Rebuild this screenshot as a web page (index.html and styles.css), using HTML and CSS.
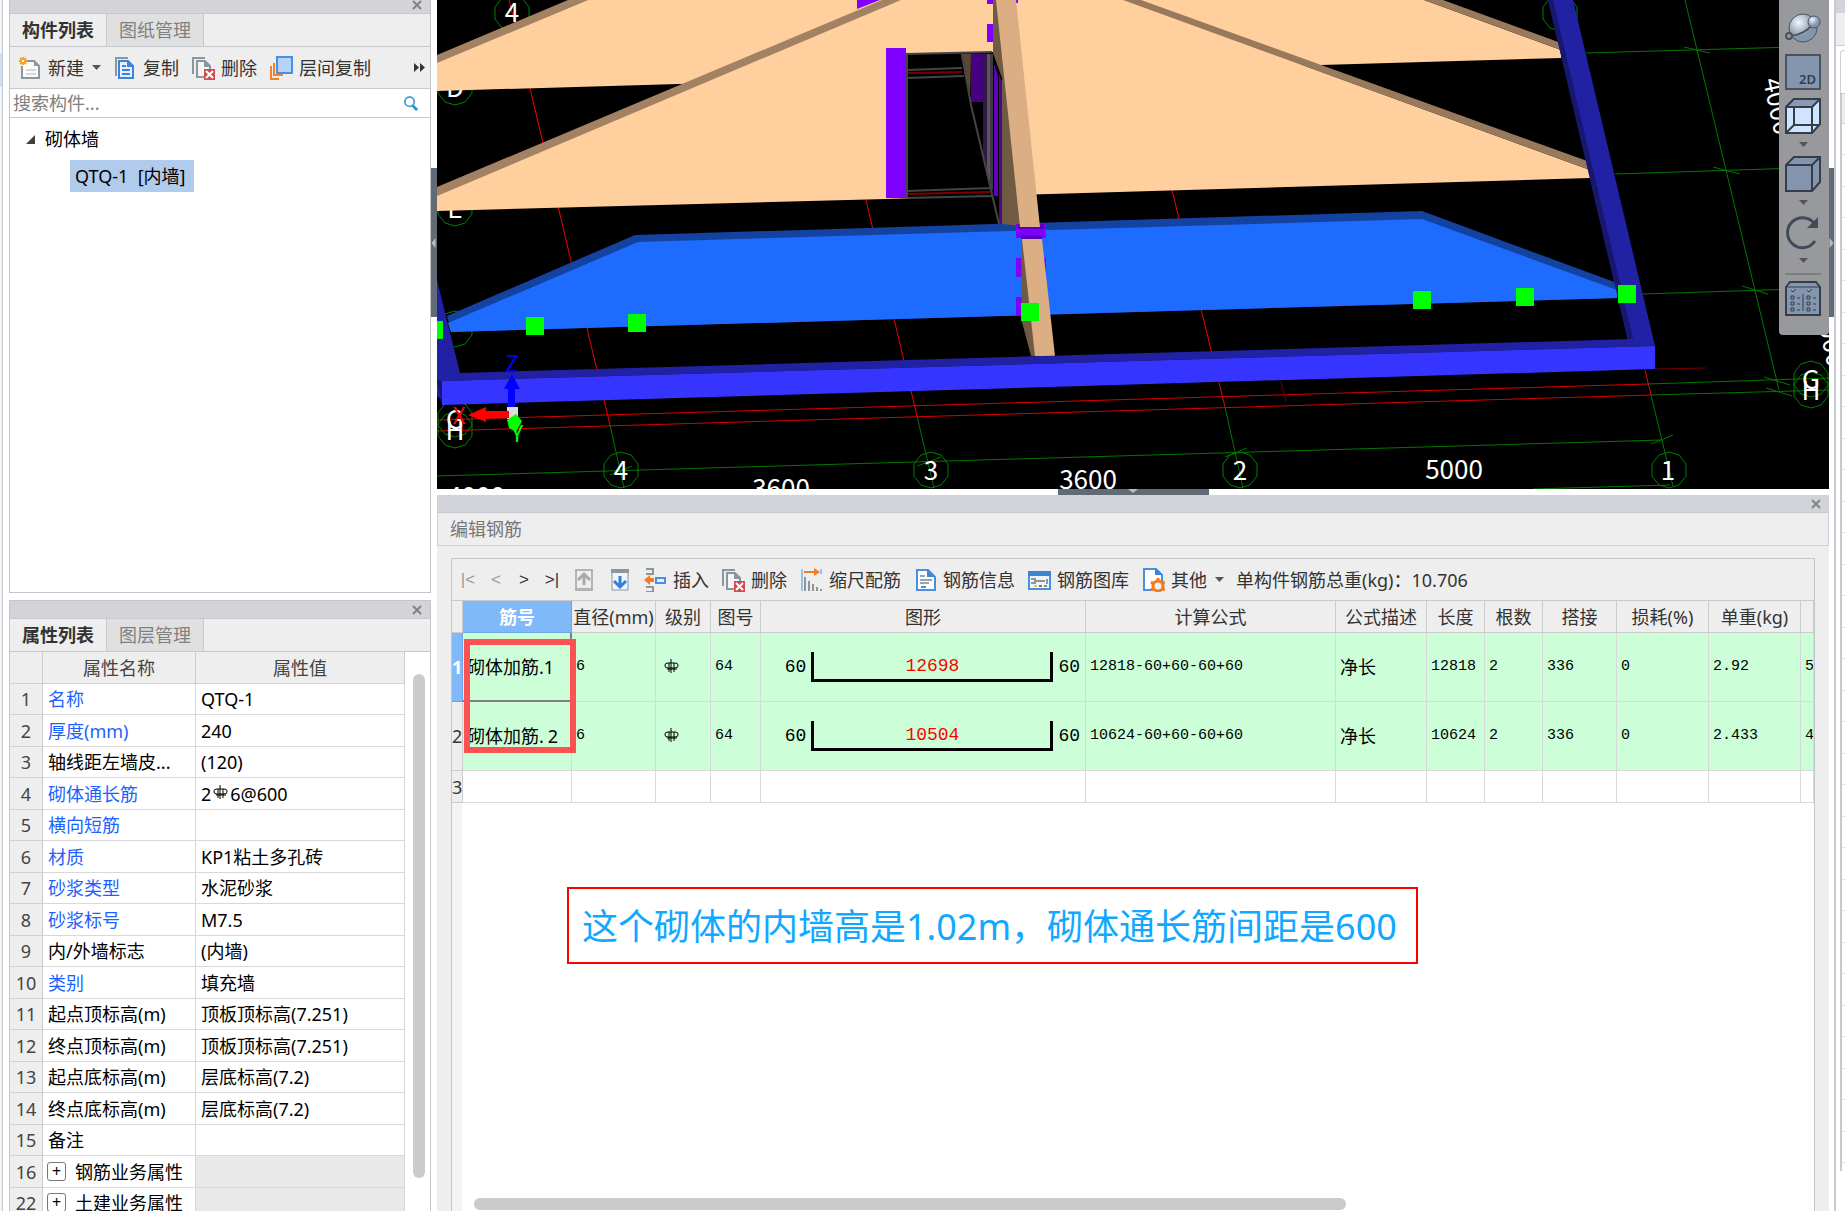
FILE: index.html
```html
<!DOCTYPE html>
<html lang="zh-CN">
<head>
  <meta charset="UTF-8">
  <title>编辑钢筋</title>
  <link rel="stylesheet" href="styles.css">
</head>
<body>

  <!-- shared icons -->
  <svg class="defs" width="0" height="0">
    <symbol id="i-new" viewBox="0 0 24 24">
      <path d="M6 5h10l5 5v12H4V10" fill="#fafafa" stroke="#8b979d" stroke-width="2"/>
      <path d="M16 4v6h6z" fill="#8b979d"/>
      <path d="M8 14h10M8 18h10" stroke="#d6d6d6" stroke-width="2"/>
      <path d="M5 1v8M1 5h8M2 2l6 6M8 2l-6 6" stroke="#f9a02c" stroke-width="2"/>
      <rect x="4" y="4" width="2" height="2" fill="#fff"/>
    </symbol>
    <symbol id="i-copy" viewBox="0 0 24 24">
      <path d="M3 20V2h12" fill="none" stroke="#8b979d" stroke-width="2"/>
      <path d="M6 5h9l5 5v12H6z" fill="#e6f1ff" stroke="#3d84d6" stroke-width="2"/>
      <path d="M14 4v7h7z" fill="#3d84d6"/>
      <path d="M9 10h4M9 14h8M9 18h8" stroke="#3d84d6" stroke-width="2"/>
    </symbol>
    <symbol id="i-del" viewBox="0 0 24 24">
      <path d="M2 18V2h12" fill="none" stroke="#8b979d" stroke-width="2"/>
      <path d="M6 5h8l5 5v11H6z" fill="#f5f5f5" stroke="#8b979d" stroke-width="2"/>
      <path d="M13 4v7h7z" fill="#8b979d"/>
      <rect x="13" y="13" width="11" height="11" fill="#d8484d"/>
      <path d="M15 15l7 7M22 15l-7 7" stroke="#fff" stroke-width="2"/>
    </symbol>
    <symbol id="i-layer" viewBox="0 0 24 24">
      <path d="M2 10v13h8M5 7v12h9" fill="none" stroke="#f4802a" stroke-width="2"/>
      <rect x="8" y="1" width="15" height="16" fill="#b5d3fb" stroke="#4a90e2" stroke-width="2"/>
    </symbol>
    <symbol id="i-insert" viewBox="0 0 24 24">
      <path d="M3 1h7v5H3M3 24h7v-5H3" fill="none" stroke="#8b979d" stroke-width="2"/>
      <path d="M1 12l6-5v3h4v4H7v3z" fill="#f47b20"/>
      <path d="M13 10h9v5h-9z" fill="#e6f1ff" stroke="#4a90e2" stroke-width="2"/>
    </symbol>
    <symbol id="i-scale" viewBox="0 0 24 24">
      <path d="M3 1v22M22 1v5" stroke="#4a90e2" stroke-width="1"/>
      <path d="M5 4h12" stroke="#f47b20" stroke-width="2"/>
      <path d="M15 0l6 4-6 4z" fill="#f47b20"/>
      <path d="M6 9v14M10 13v10M14 16v7M18 19v4M22 21v2" stroke="#8b979d" stroke-width="2"/>
    </symbol>
    <symbol id="i-info" viewBox="0 0 24 24">
      <path d="M4 2h11l7 7v13H4z" fill="#fff" stroke="#4a90e2" stroke-width="2"/>
      <path d="M14 1v8h8z" fill="#3d84d6"/>
      <path d="M7 8h5M7 12h12M7 15h9" stroke="#9aa5aa" stroke-width="2"/>
      <path d="M8 19h5" stroke="#4a90e2" stroke-width="2"/>
    </symbol>
    <symbol id="i-lib" viewBox="0 0 24 24">
      <rect x="2" y="4" width="21" height="17" fill="#eef5ff" stroke="#4a90e2" stroke-width="2"/>
      <rect x="1" y="3" width="23" height="5" fill="#3d84d6"/>
      <path d="M4 11h4v4H4M8 13h10M20 11v5" fill="none" stroke="#8b979d" stroke-width="2"/>
      <path d="M7 18h3" stroke="#f0c030" stroke-width="2"/><path d="M12 18h3" stroke="#e05050" stroke-width="2"/><path d="M17 18h3" stroke="#50b050" stroke-width="2"/>
    </symbol>
    <symbol id="i-other" viewBox="0 0 24 24">
      <path d="M3 1h12l6 6v15H3z" fill="#fff" stroke="#4a90e2" stroke-width="2"/>
      <path d="M14 0v7h8z" fill="#3d84d6"/>
      <circle cx="17" cy="18" r="5" fill="#eee" stroke="#f47b20" stroke-width="3"/>
      <path d="M17 10v3M17 23v2M10 14l3 2M24 14l-3 2M10 22l3-2M24 22l-3-2" stroke="#f47b20" stroke-width="3"/>
    </symbol>
    <symbol id="i-caret" viewBox="0 0 9 6"><path d="M0 0h9L4.500 5z" fill="#555"/></symbol>
    <symbol id="i-close" viewBox="0 0 10 10"><path d="M1 1l8 8M9 1L1 9" stroke="#808285" stroke-width="2"/></symbol>
    <symbol id="i-rebar" viewBox="0 0 15 14">
      <path d="M7 0v14M5 4v9M10 4v9M3 10h10M4 4h7q3 0 3 2v1q0 2-3 2H4q-3 0-3-2V6q0-2 3-2z" fill="none" stroke="#000"/>
    </symbol>
    <symbol id="axis" viewBox="-20 -20 40 40">
      <polygon points="0,-18 10,-15 17,-6 17,6 10,15 0,18 -10,15 -17,6 -17,-6 -10,-15" fill="none" stroke="#008200"/>
    </symbol>
  </svg>

  <div class="app">

    <div class="edge edge-left"><div class="edge-mark"></div></div>

    <aside class="sidebar">
      <section class="panel components">
        <div class="titlebar"><button aria-label="关闭"><svg><use href="#i-close"/></svg></button></div>
        <div class="tabs">
          <button class="tab active">构件列表</button>
          <button class="tab">图纸管理</button>
        </div>
        <div class="toolbar">
          <button class="tool"><svg class="icon"><use href="#i-new"/></svg>新建<svg class="caret"><use href="#i-caret"/></svg></button>
          <button class="tool"><svg class="icon"><use href="#i-copy"/></svg>复制</button>
          <button class="tool"><svg class="icon"><use href="#i-del"/></svg>删除</button>
          <button class="tool"><svg class="icon"><use href="#i-layer"/></svg>层间复制</button>
          <button class="more" aria-label="更多"><svg viewBox="0 0 12 9"><path d="M0 0l5 4.500L0 9zM6 0l5 4.500L6 9z" fill="#333"/></svg></button>
        </div>
        <div class="search">
          <input type="text" placeholder="搜索构件..." aria-label="搜索构件">
          <svg viewBox="0 0 16 16"><circle cx="7" cy="6" r="5" fill="none" stroke="#4ba3d9" stroke-width="2"/><path d="M10 10l5 5" stroke="#2f8fc9" stroke-width="3"/></svg>
        </div>
        <div class="tree">
          <div class="tree-node"><svg viewBox="0 0 9 9"><path d="M9 0v9H0z" fill="#404040"/></svg>砌体墙</div>
          <div class="tree-leaf">QTQ-1&nbsp; [内墙]</div>
        </div>
      </section>

      <section class="panel properties">
        <div class="titlebar"><button aria-label="关闭"><svg><use href="#i-close"/></svg></button></div>
        <div class="tabs">
          <button class="tab active">属性列表</button>
          <button class="tab">图层管理</button>
        </div>
        <div class="props-body">
          <table class="props">
            <colgroup><col class="c-no"><col class="c-name"><col></colgroup>
            <thead><tr><th></th><th>属性名称</th><th>属性值</th></tr></thead>
            <tbody>
              <tr><th>1</th><td class="key">名称</td><td>QTQ-1</td></tr>
              <tr><th>2</th><td class="key">厚度(mm)</td><td>240</td></tr>
              <tr><th>3</th><td>轴线距左墙皮...</td><td>(120)</td></tr>
              <tr><th>4</th><td class="key">砌体通长筋</td><td>2<svg class="rebar"><use href="#i-rebar"/></svg>6@600</td></tr>
              <tr><th>5</th><td class="key">横向短筋</td><td></td></tr>
              <tr><th>6</th><td class="key">材质</td><td>KP1粘土多孔砖</td></tr>
              <tr><th>7</th><td class="key">砂浆类型</td><td>水泥砂浆</td></tr>
              <tr><th>8</th><td class="key">砂浆标号</td><td>M7.5</td></tr>
              <tr><th>9</th><td>内/外墙标志</td><td>(内墙)</td></tr>
              <tr><th>10</th><td class="key">类别</td><td>填充墙</td></tr>
              <tr><th>11</th><td>起点顶标高(m)</td><td>顶板顶标高(7.251)</td></tr>
              <tr><th>12</th><td>终点顶标高(m)</td><td>顶板顶标高(7.251)</td></tr>
              <tr><th>13</th><td>起点底标高(m)</td><td>层底标高(7.2)</td></tr>
              <tr><th>14</th><td>终点底标高(m)</td><td>层底标高(7.2)</td></tr>
              <tr><th>15</th><td>备注</td><td></td></tr>
              <tr><th>16</th><td class="group"><button class="expand">+</button>钢筋业务属性</td><td class="off"></td></tr>
              <tr><th>22</th><td class="group"><button class="expand">+</button>土建业务属性</td><td class="off"></td></tr>
            </tbody>
          </table>
          <div class="vscroll"><div class="vthumb"></div></div>
        </div>
      </section>
    </aside>

    <div class="splitter"><div class="grip">
      <svg viewBox="0 0 4 10"><path d="M4 0v10L0 5z" fill="#b9bec3"/></svg>
    </div></div>

    <main class="work">
      <section class="viewport">
        <svg class="scene" viewBox="437 0 1392 489" preserveAspectRatio="xMidYMin slice">
          <rect x="0" y="0" width="2400" height="800" fill="#000"/>

          <!-- grid axes -->
          <g stroke="#f00000" stroke-width="1">
            <path d="M509 0L610 425M866 200L917 416M1172 190L1225 407M1645 370L1651 395"/>
            <path d="M437 420L1648 384M437 431L1651 395" stroke="#dc0000"/>
            <path d="M1281 382L1286 402M1655 369L1706 368" stroke="#780000"/>
          </g>
          <g stroke="#007800" stroke-width="1">
            <path d="M610 425L624 488M917 416L934 488M1225 407L1243 488M1651 395L1673 486"/>
            <path d="M437 476L1661 440M1533 489L1670 485"/>
            <path d="M1586 53L1829 46M1615 174L1829 167M1642 294L1829 288M1648 384L1829 378M1651 395L1829 390M1685 0L1779 390"/>
            <path d="M1684 47L1710 53M1713 167L1740 174M1742 286L1768 294M1764 377L1790 385M1766 388L1792 396"/>
            <path d="M1651 444L1673 435M610 475L632 466M917 466L941 457M1225 457L1247 448"/>
          </g>
          <g>
            <use href="#axis" x="492" y="-7" width="40" height="40"/>
            <use href="#axis" x="435" y="67" width="40" height="40"/>
            <use href="#axis" x="435" y="188" width="40" height="40"/>
            <use href="#axis" x="435" y="309" width="40" height="40"/>
            <use href="#axis" x="435" y="399" width="40" height="40"/>
            <use href="#axis" x="435" y="410" width="40" height="40"/>
            <use href="#axis" x="601" y="450" width="40" height="40"/>
            <use href="#axis" x="911" y="450" width="40" height="40"/>
            <use href="#axis" x="1220" y="450" width="40" height="40"/>
            <use href="#axis" x="1649" y="450" width="40" height="40"/>
            <use href="#axis" x="1540" y="-7" width="40" height="40"/>
            <use href="#axis" x="1791" y="359" width="40" height="40"/>
            <use href="#axis" x="1791" y="370" width="40" height="40"/>
          </g>
          <g class="dims">
            <text x="512" y="22">4</text>
            <text x="455" y="97">D</text>
            <text x="455" y="218">E</text>
            <text x="455" y="429">G</text>
            <text x="455" y="440">H</text>
            <text x="621" y="480">4</text>
            <text x="931" y="480">3</text>
            <text x="1240" y="480">2</text>
            <text x="1668" y="480">1</text>
            <text x="1811" y="389">G</text>
            <text x="1811" y="400">H</text>
            <text x="476" y="506">4000</text>
            <text x="781" y="498">3600</text>
            <text x="1088" y="489">3600</text>
            <text x="1454" y="479">5000</text>
            <text class="start" transform="translate(1763 80) rotate(78)">4000</text>
            <text class="start" transform="translate(1816 312) rotate(78)">5000</text>
          </g>

          <!-- rear gable -->
          <path d="M437 62L587 0H1424L1561 50V58L437 91z" fill="#ffcf9e"/>
          <path d="M437 55L568 0H588L437 63z" fill="#a38163"/>
          <path d="M1424 0H1443L1561 43V50z" fill="#98795c"/>
          <path d="M857 0H880L857 9z" fill="#8000ff"/>

          <!-- middle gable -->
          <path d="M437 195L900 0H1124L1590 170V178L886 199L437 211z" fill="#ffcf9e"/>
          <path d="M437 187L882 0H901L437 196z" fill="#a38163"/>
          <path d="M1123 0H1141L1590 162V170z" fill="#98795c"/>

          <!-- door opening -->
          <path d="M907 54L993 52L1004 78V225H907z" fill="#000"/>
          <rect x="886" y="48" width="20" height="150" fill="#8000ff"/>
          <path d="M961 54H971L970 100z" fill="#5a4634"/>
          <rect x="971" y="54" width="12" height="48" fill="#460080"/>
          <path d="M983 54H987V170L983 158z" fill="#2c1a40"/>
          <path d="M987 54H990V186L987 172z" fill="#6b4a68"/>
          <path d="M990 54H993V190H990z" fill="#3c3c3c"/>
          <path d="M994 64L998 76V196H994z" fill="#6000c0"/>
          <path d="M999 74L1002 82V224H999z" fill="#4a0a86"/>
          <path d="M907 198V54L992 52M907 70L962 68M907 78L964 76M907 191L990 188M907 198L992 196M962 55L971 105L984 160L991 190L999 224" fill="none" stroke="#444" stroke-width="2"/>
          <path d="M908 73L962 72M908 194L990 192" stroke="#7a0000" stroke-width="2"/>

          <!-- selected wall -->
          <path d="M447 316L635 235L1422 211L1617 283V298L451 332z" fill="#1442a0"/>
          <path d="M448 323L638 242L1422 219L1617 290V298L451 332z" fill="#1e6cff"/>

          <!-- cross wall -->
          <path d="M993 0H997L1021 226L1002 224V78L993 53z" fill="#705a44"/>
          <path d="M987 0H993V4H987zM987 24H993V42H987zM1015 0H1018V3H1015z" fill="#8000ff"/>
          <path d="M1016 224H1045L1046 238H1016zM1016 258H1022V277H1016zM1016 297H1022V315H1016zM1043 258H1046V275H1044z" fill="#8000ff"/>
          <path d="M1018 224H1044V229H1018zM1021 235H1042V239H1021z" fill="#5c00b8"/>
          <path d="M996 0H1016L1040 227H1020z" fill="#dbae83"/>
          <path d="M1021 239L1022 322L1031 356H1036L1029 303L1024 239z" fill="#705a44"/>
          <path d="M1022 239H1042L1055 356H1035z" fill="#dbae83"/>

          <!-- ring beam -->
          <path d="M437 280L460 373L1632 339L1655 346L442 381V400L437 396z" fill="#2121a3"/>
          <path d="M1548 0H1573L1655 346L1628 341z" fill="#2121a3"/>
          <path d="M1548 0H1553L1633 339H1628z" fill="#17176e"/>
          <path d="M442 381L1655 346V369L442 405z" fill="#3535ff"/>
          <path d="M437 380L442 381V405z" fill="#17176e"/>

          <!-- grips -->
          <path d="M425 321h18v18h-18zM526 317h18v18h-18zM628 314h18v18h-18zM1021 303h18v18h-18zM1413 291h18v18h-18zM1516 288h18v18h-18zM1618 285h18v18h-18z" fill="#00ff00"/>

          <!-- ucs -->
          <g class="ucs">
            <path d="M508 386h7v21h-7zM504 389L512 374L520 389z" fill="#0000ff"/>
            <rect x="507" y="407" width="11" height="12" fill="#ddd"/>
            <path d="M486 411h23v7h-23zM468 415L486 407V422z" fill="#ff0000"/>
            <path d="M507 420L516 414L522 421L516 432L509 428z" fill="#00ff00"/>
            <text x="512" y="372" fill="#0000ff">Z</text>
            <text x="459" y="424" fill="#ff0000">X</text>
            <text x="517" y="442" fill="#00ff00">Y</text>
          </g>
        </svg>

        <div class="viewbar">
          <button class="wide" aria-label="动态观察"><svg viewBox="0 0 36 36">
            <defs><radialGradient id="ball" cx="35%" cy="30%"><stop offset="0" stop-color="#f4f7fb"/><stop offset="1" stop-color="#8496ae"/></radialGradient></defs>
            <circle cx="18" cy="18" r="14" fill="url(#ball)" stroke="#4a5260"/>
            <circle cx="4" cy="26" r="3" fill="none" stroke="#4a5260" stroke-width="2"/>
            <path d="M6 26Q20 24 27 15" fill="none" stroke="#4a5260" stroke-width="2"/>
            <circle cx="29" cy="12" r="6" fill="url(#ball)" stroke="#4a5260"/>
          </svg></button>
          <button class="wide two-d">2D</button>
          <button aria-label="线框"><svg viewBox="0 0 36 36">
            <path d="M1 9L9 1H35V26L27 35H1z" fill="#cfe4ff" stroke="#353d4a" stroke-width="2"/>
            <path d="M1 9L9 1H35L27 9z" fill="#8a9ab3"/>
            <path d="M1 9H27V35M27 9L35 1M9 9V27H35M9 27L1 35M1 9L9 1H35" fill="none" stroke="#353d4a" stroke-width="2"/>
          </svg></button>
          <button class="drop" aria-label="线框选项"><svg><use href="#i-caret"/></svg></button>
          <button aria-label="实体"><svg viewBox="0 0 36 36">
            <path d="M1 9L9 1H35V26L27 35H1z" fill="#8496ae" stroke="#353d4a" stroke-width="2"/>
            <path d="M1 9H27V35M27 9L35 1" fill="none" stroke="#353d4a" stroke-width="2"/>
          </svg></button>
          <button class="drop" aria-label="实体选项"><svg><use href="#i-caret"/></svg></button>
          <button aria-label="旋转"><svg viewBox="0 0 36 36">
            <path d="M30 27A15 15 0 1 1 29 9" fill="none" stroke="#414a57" stroke-width="3"/>
            <path d="M33 3V14H22z" fill="#414a57"/>
          </svg></button>
          <button class="drop" aria-label="旋转选项"><svg><use href="#i-caret"/></svg></button>
          <hr>
          <button aria-label="显示设置"><svg viewBox="0 0 36 36">
            <path d="M1 7L5 2H31L35 7V35H1z" fill="#8496ae" stroke="#353d4a" stroke-width="2"/>
            <path d="M1 7H35M18 14V31M12 18h3M12 24h3M12 30h3M28 18h3M28 24h3M28 30h3" stroke="#353d4a"/>
            <path d="M6 10l2 2 3-3M22 10l2 2 3-3M6 16h3v3H6zM6 22h3v3H6zM6 28h3v3H6zM22 16h3v3h-3zM22 22h3v3h-3zM22 28h3v3h-3z" fill="none" stroke="#353d4a"/>
          </svg></button>
        </div>
      </section>

      <div class="hsplitter"><div class="hgrip">
        <svg viewBox="0 0 10 4"><path d="M0 0h10L5 4z" fill="#b9bec3"/></svg>
      </div></div>

      <section class="rebar-panel">
        <div class="titlebar"><button aria-label="关闭"><svg><use href="#i-close"/></svg></button></div>
        <div class="caption">编辑钢筋</div>
        <div class="editor">
          <div class="toolbar">
            <div class="nav">
              <button disabled>|&lt;</button>
              <button disabled>&lt;</button>
              <button>&gt;</button>
              <button>&gt;|</button>
            </div>
            <div class="move">
              <button aria-label="上移"><svg viewBox="0 0 20 24"><rect x="2" y="2" width="16" height="20" fill="#eee" stroke="#b4b4b4" stroke-width="2"/><path d="M1 20h18v3H1z" fill="#b4b4b4"/><path d="M10 17V7M4 12l6-6 6 6" fill="none" stroke="#a8a8a8" stroke-width="3"/></svg></button>
              <button aria-label="下移"><svg viewBox="0 0 20 24"><rect x="2" y="2" width="16" height="20" fill="#eef5ff" stroke="#8b979d" stroke-width="1"/><path d="M1 1h18v4H1z" fill="#8b979d"/><path d="M10 8v10M4 13l6 6 6-6" fill="none" stroke="#2f7fdb" stroke-width="3"/></svg></button>
            </div>
            <button class="tool"><svg class="icon"><use href="#i-insert"/></svg>插入</button>
            <button class="tool"><svg class="icon"><use href="#i-del"/></svg>删除</button>
            <button class="tool"><svg class="icon"><use href="#i-scale"/></svg>缩尺配筋</button>
            <button class="tool"><svg class="icon"><use href="#i-info"/></svg>钢筋信息</button>
            <button class="tool"><svg class="icon"><use href="#i-lib"/></svg>钢筋图库</button>
            <button class="tool"><svg class="icon"><use href="#i-other"/></svg>其他<svg class="caret"><use href="#i-caret"/></svg></button>
            <span class="total">单构件钢筋总重(kg)：10.706</span>
          </div>

          <div class="grid-body">
            <table class="bars">
              <colgroup>
                <col class="w-no"><col class="w-name"><col class="w-dia"><col class="w-grade"><col class="w-fig"><col class="w-shape"><col class="w-formula">
                <col class="w-desc"><col class="w-len"><col class="w-len"><col class="w-lap"><col class="w-kg"><col class="w-kg"><col>
              </colgroup>
              <thead>
                <tr><th></th><th class="current">筋号</th><th>直径(mm)</th><th>级别</th><th>图号</th><th>图形</th><th>计算公式</th><th>公式描述</th><th>长度</th><th>根数</th><th>搭接</th><th>损耗(%)</th><th>单重(kg)</th><th></th></tr>
              </thead>
              <tbody>
                <tr class="filled">
                  <th class="current">1</th><td class="zh cell-focus">砌体加筋.1</td><td>6</td><td><svg class="rebar"><use href="#i-rebar"/></svg></td><td>64</td>
                  <td><div class="shape"><span>60</span><div class="hook">12698</div><span>60</span></div></td>
                  <td>12818-60+60-60+60</td><td class="zh">净长</td><td>12818</td><td>2</td><td>336</td><td>0</td><td>2.92</td><td>5</td>
                </tr>
                <tr class="filled">
                  <th>2</th><td class="zh">砌体加筋.<span class="mono">2</span></td><td>6</td><td><svg class="rebar"><use href="#i-rebar"/></svg></td><td>64</td>
                  <td><div class="shape"><span>60</span><div class="hook">10504</div><span>60</span></div></td>
                  <td>10624-60+60-60+60</td><td class="zh">净长</td><td>10624</td><td>2</td><td>336</td><td>0</td><td>2.433</td><td>4</td>
                </tr>
                <tr><th>3</th><td></td><td></td><td></td><td></td><td></td><td></td><td></td><td></td><td></td><td></td><td></td><td></td><td></td></tr>
              </tbody>
            </table>
            <div class="mark"></div>
            <p class="note">这个砌体的内墙高是1.02m，砌体通长筋间距是600</p>
            <div class="hscroll"></div>
          </div>
        </div>
      </section>
    </main>

    <div class="splitter"><div class="grip">
      <svg viewBox="0 0 4 10"><path d="M0 0v10L4 5z" fill="#b9bec3"/></svg>
    </div></div>

    <div class="edge edge-right">
      <div class="edge-title"></div>
      <div class="edge-tab"></div>
      <div class="edge-box"></div>
      <div class="edge-head"></div>
      <div class="edge-rows"></div>
    </div>
  </div>

</body>
</html>
```
FILE: styles.css
```css
* {
  box-sizing: border-box;
}

body {
  margin: 0;
  font-family: "Noto Sans", "Noto Sans CJK SC", sans-serif;
  font-size: 18px;
  line-height: 24px;
  color: #333;
  background: #fff;
}

button {
  font: inherit;
  color: inherit;
  background: none;
  border: none;
  padding: 0;
  cursor: pointer;
}

svg {
  display: block;
}

.defs {
  position: absolute;
}

.app {
  display: grid;
  grid-template-columns: 9px 422px 6px 1fr 5px 11px;
  height: 100vh;
  overflow: hidden;
}

/* window edges */
.edge-left {
  width: 3px;
  background: #f4f4f4;
  border-right: 1px solid #c2c9d0;
}

.edge-mark {
  height: 34px;
  margin-top: 53px;
  background: #cfe0f5;
}

.edge-right {
  display: flex;
  flex-direction: column;
  border-left: 2px solid #c6cad0;
}

.edge-title {
  height: 13px;
  background: #d3d4d9;
}

.edge-tab {
  height: 33px;
  background: #eee;
  border-bottom: 1px solid #d0d0d4;
}

.edge-box {
  height: 43px;
  margin-top: 4px;
  margin-left: 4px;
  border-left: 1px solid #d0d0d4;
  border-top: 1px solid #d0d0d4;
  border-top-left-radius: 4px;
}

.edge-head {
  height: 31px;
  margin-left: 4px;
  background: #eee;
  border: 1px solid #ccc;
  border-left: 2px solid #c8c8cc;
  border-right: none;
}

.edge-rows {
  flex: 1;
  margin: 0 0 40px 4px;
  border-left: 2px solid #c8c8cc;
  background: repeating-linear-gradient(#fff 0 30px, #ddd 30px 31px, #fff 31px 62px, #ddd 62px 63px);
}

/* side panels */
.sidebar {
  display: grid;
  grid-template-rows: 593fr 611fr;
  gap: 7px;
  min-height: 0;
}

.panel {
  display: flex;
  flex-direction: column;
  min-height: 0;
  overflow: hidden;
  border: 1px solid #c4c6ca;
}

.components {
  border-top: none;
}

.properties {
  border-bottom: none;
}

.titlebar {
  display: flex;
  flex: none;
  justify-content: flex-end;
  align-items: center;
  height: 18px;
  padding-right: 8px;
  background: #d3d4d9;
  border-bottom: 1px solid #c6cad0;
}

.components .titlebar {
  height: 14px;
  align-items: flex-start;
}

.titlebar svg {
  width: 10px;
  height: 10px;
}

.tabs {
  display: flex;
  flex: none;
  height: 33px;
  background: #eee;
  border-bottom: 1px solid #c6cad0;
}

.tab {
  padding: 0 12px;
  background: #e0e0e0;
  border-right: 1px solid #c6c8cc;
  color: #808080;
}

.tab.active {
  background: #eee;
  color: #333;
  font-weight: 600;
}

.toolbar {
  display: flex;
  flex: none;
  align-items: center;
  gap: 12px;
  height: 42px;
  padding-left: 8px;
  background: #eee;
  border-bottom: 1px solid #c6cad0;
  white-space: nowrap;
}

.tool {
  display: flex;
  align-items: center;
  gap: 6px;
}

.icon {
  width: 24px;
  height: 24px;
}

.caret {
  width: 9px;
  height: 6px;
  margin-left: 2px;
}

.more {
  margin-left: auto;
  padding-right: 4px;
}

.more svg {
  width: 12px;
  height: 9px;
}

.search {
  display: flex;
  flex: none;
  align-items: center;
  height: 29px;
  padding: 0 12px 0 3px;
  border-bottom: 1px solid #c6c8cc;
}

.search input {
  flex: 1;
  min-width: 0;
  padding: 0;
  border: none;
  outline: none;
  font: inherit;
}

.search input::placeholder {
  color: #808080;
}

.search svg {
  width: 15px;
  height: 15px;
}

.tree {
  padding: 5px 16px;
  color: #000;
}

.tree-node {
  display: flex;
  align-items: center;
  gap: 10px;
  height: 32px;
}

.tree-node svg {
  width: 9px;
  height: 9px;
}

.tree-leaf {
  width: fit-content;
  margin: 5px 0 0 44px;
  padding: 4px 8px 4px 5px;
  background: #b1cbec;
}

.props-body {
  display: flex;
  flex: 1;
  min-height: 0;
}

.props {
  flex: 1;
  table-layout: fixed;
  border-spacing: 0;
  width: 396px;
  color: #000;
}

.props th {
  padding: 0;
  background: #eee;
  border-right: 1px solid #ccc;
  border-bottom: 1px solid #d0d0d0;
  color: #444;
  font-weight: 400;
}

.props td {
  padding: 0 5px;
  border-right: 1px solid #d8d8d8;
  border-bottom: 1px solid #d8d8d8;
  white-space: nowrap;
}

.props tr {
  height: 31px;
}

.props thead tr,
.props tbody tr:nth-child(even) {
  height: 32px;
}

.c-no {
  width: 33px;
}

.c-name {
  width: 153px;
}

.props .key {
  color: #1c62ff;
}

.props .off {
  background: #e9e9e9;
}

.props .group {
  padding-left: 4px;
}

.expand {
  width: 19px;
  height: 19px;
  margin-right: 9px;
  border: 1px solid #777;
  border-radius: 3px;
  font-size: 16px;
  line-height: 15px;
  vertical-align: 2px;
}

.rebar {
  display: inline-block;
  width: 15px;
  height: 14px;
  margin: 0 2px;
}

.props .rebar {
  vertical-align: 2px;
}

.vscroll {
  width: 25px;
  padding: 22px 5px 33px 8px;
}

.vthumb {
  height: 100%;
  border-radius: 6px;
  background: #cbcbcb;
}

/* splitters */
.splitter {
  padding-top: 168px;
}

.grip {
  display: flex;
  align-items: center;
  height: 149px;
  background: #606b75;
}

.grip svg {
  width: 5px;
  height: 10px;
}

.hsplitter {
  display: flex;
  justify-content: center;
}

.hgrip {
  display: flex;
  justify-content: center;
  width: 151px;
  background: #606b75;
}

.hgrip svg {
  width: 10px;
  height: 4px;
}

/* 3d view */
.work {
  display: grid;
  grid-template-rows: 489fr 6px 716fr;
  min-width: 0;
  min-height: 0;
}

.viewport {
  position: relative;
  min-height: 0;
  overflow: hidden;
  background: #000;
}

.scene {
  width: 100%;
  height: 100%;
}

.scene text {
  text-anchor: middle;
  font-family: "Noto Sans CJK SC", "Noto Sans", sans-serif;
  font-size: 26px;
}

.dims {
  fill: #fff;
}

.scene .start {
  text-anchor: start;
}

.scene .ucs text {
  font-size: 23px;
}

.viewbar {
  position: absolute;
  top: 0;
  right: 0;
  display: flex;
  flex-direction: column;
  align-items: center;
  gap: 4px;
  width: 50px;
  padding: 10px 2px 19px 0;
  background: #97999d;
  border-radius: 0 0 4px 4px;
}

.viewbar button,
.viewbar svg {
  width: 36px;
  height: 36px;
}

.viewbar .wide {
  margin-bottom: 4px;
}

.viewbar .two-d {
  padding: 13px 3px 0 0;
  background: #8496ae;
  border: 2px solid #4a5260;
  color: #353d4a;
  font: 600 13px/18px "Noto Sans", sans-serif;
  text-align: right;
}

.viewbar .drop {
  display: flex;
  align-items: center;
  justify-content: center;
  height: 14px;
}

.viewbar .drop svg {
  width: 9px;
  height: 6px;
}

.viewbar hr {
  width: 36px;
  margin: 1px 0;
  border: none;
  border-top: 2px solid #7b7d80;
}

/* rebar editor */
.rebar-panel {
  display: flex;
  flex-direction: column;
  min-height: 0;
  background: #eee;
}

.caption {
  flex: none;
  height: 33px;
  padding: 4px 12px;
  border: 1px solid #cdd0d6;
  border-top: none;
  color: #777;
}

.editor {
  display: flex;
  flex: 1;
  flex-direction: column;
  min-height: 0;
  margin: 12px 14px 0;
  border: 1px solid #c2c6ca;
  border-bottom: none;
}

.editor .toolbar {
  padding-left: 2px;
  border-bottom-color: #c8c8c8;
}

.nav {
  display: flex;
  font-family: "Liberation Sans", sans-serif;
  font-size: 17px;
}

.nav button {
  width: 28px;
}

.nav button:disabled {
  color: #999;
}

.move {
  display: flex;
  margin: 0 -7px 0 -12px;
}

.move button {
  width: 36px;
  padding: 0 8px;
}

.move svg {
  width: 20px;
  height: 24px;
}

.grid-body {
  position: relative;
  display: flex;
  flex: 1;
  flex-direction: column;
  min-height: 0;
  overflow: hidden;
  background: linear-gradient(to right, #f4f4f4 10px, #fff 10px);
}

.bars {
  flex: none;
  table-layout: fixed;
  border-spacing: 0;
  width: 100%;
  white-space: nowrap;
}

.bars th {
  height: 32px;
  padding: 0;
  background: #eee;
  border-right: 1px solid #ccc;
  border-bottom: 1px solid #ccc;
  font-weight: 400;
}

.bars th.current {
  background: #80b9fa;
  border-color: #6aa5e8;
  color: #fff;
  font-weight: 700;
}

.bars td {
  overflow: hidden;
  padding: 0 0 0 4px;
  background: #fff;
  border-right: 1px solid #d8d8d8;
  border-bottom: 1px solid #d8d8d8;
  color: #000;
  font-family: "Liberation Mono", monospace;
  font-size: 15px;
}

.bars .zh {
  font-family: "Noto Sans", "Noto Sans CJK SC", sans-serif;
  font-size: 18px;
}

.bars .zh .mono {
  margin-left: 4px;
}

.bars .filled {
  height: 69px;
}

.bars .filled td {
  background: #ccffd8;
}

.bars .cell-focus {
  border-right: 2px solid #808080;
  border-bottom: 2px solid #808080;
}

.bars .rebar {
  margin-left: 4px;
  vertical-align: middle;
}

.w-no { width: 11px; }
.w-name { width: 109px; }
.w-dia { width: 84px; }
.w-grade { width: 55px; }
.w-fig { width: 50px; }
.w-shape { width: 325px; }
.w-formula { width: 250px; }
.w-desc { width: 91px; }
.w-len { width: 58px; }
.w-lap { width: 74px; }
.w-kg { width: 92px; }

.shape {
  display: flex;
  justify-content: flex-end;
  align-items: center;
  gap: 5px;
  padding-right: 5px;
  font-size: 18px;
}

.hook {
  width: 242px;
  height: 30px;
  border: 3px solid #000;
  border-top: none;
  color: #f00;
  line-height: 28px;
  text-align: center;
}

.mark {
  position: absolute;
  top: 38px;
  left: 12px;
  width: 112px;
  height: 114px;
  border: 6px solid #fc5252;
}

.note {
  width: fit-content;
  margin: 84px 0 0 115px;
  padding: 16px 19px 13px 13px;
  border: 2px solid #f00;
  color: #12a8ff;
  font-size: 36px;
  line-height: 44px;
}

.hscroll {
  flex: none;
  width: 64%;
  height: 12px;
  margin: auto 0 1px 22px;
  border-radius: 6px;
  background: #cbcbcb;
}
```
